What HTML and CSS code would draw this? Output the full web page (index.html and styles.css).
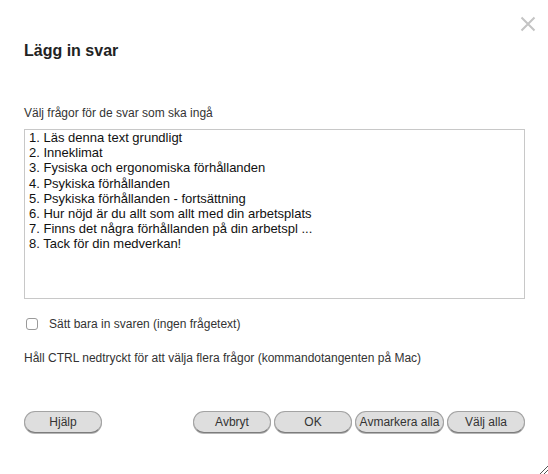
FILE: index.html
```html
<!DOCTYPE html>
<html lang="sv">
<head>
<meta charset="utf-8">
<link rel="stylesheet" href="styles.css">
</head>
<body>
<div class="dialog">
  <button class="close" aria-label="Stäng">
    <svg width="16" height="16" viewBox="0 0 16 16"><path d="M1.5 1.5 L14.5 14.5 M14.5 1.5 L1.5 14.5" stroke="#c4c4c4" stroke-width="2" fill="none"/></svg>
  </button>
  <h1 class="title">Lägg in svar</h1>
  <p class="label">Välj frågor för de svar som ska ingå</p>
  <div class="listbox">
    <div class="opt">1. Läs denna text grundligt</div>
    <div class="opt">2. Inneklimat</div>
    <div class="opt">3. Fysiska och ergonomiska förhållanden</div>
    <div class="opt">4. Psykiska förhållanden</div>
    <div class="opt">5. Psykiska förhållanden - fortsättning</div>
    <div class="opt">6. Hur nöjd är du allt som allt med din arbetsplats</div>
    <div class="opt">7. Finns det några förhållanden på din arbetspl ...</div>
    <div class="opt">8. Tack för din medverkan!</div>
  </div>
  <label class="check"><span class="box"></span>Sätt bara in svaren (ingen frågetext)</label>
  <p class="hint">Håll CTRL nedtryckt för att välja flera frågor (kommandotangenten på Mac)</p>
  <div class="buttons">
    <button class="btn help">Hjälp</button>
    <div class="right">
      <button class="btn">Avbryt</button>
      <button class="btn">OK</button>
      <button class="btn narrow">Avmarkera alla</button>
      <button class="btn">Välj alla</button>
    </div>
  </div>
  <div class="grip"></div>
</div>
</body>
</html>
```
FILE: styles.css
```css
html, body {
  margin: 0;
  padding: 0;
  background: #fff;
}
body {
  font-family: "Liberation Sans", Arial, sans-serif;
  color: #222;
}
.dialog {
  position: relative;
  width: 548px;
  height: 474px;
  box-sizing: border-box;
  padding: 42px 23px 0 24px;
}
.close {
  position: absolute;
  top: 16px;
  right: 12px;
  width: 16px;
  height: 16px;
  padding: 0;
  border: 0;
  background: none;
}
.close svg { display: block; }
.title {
  margin: 0;
  font-size: 16px;
  font-weight: bold;
  line-height: 18px;
  color: #222;
}
.label {
  margin: 46px 0 0;
  font-size: 12px;
  line-height: 14px;
  color: #333;
}
.listbox {
  margin-top: 9px;
  height: 168px;
  border: 1px solid #c8c8c8;
  padding: 0 4px;
  font-size: 13px;
  line-height: 15.2px;
  color: #111;
}
.check {
  display: flex;
  align-items: center;
  margin-top: 18px;
  padding-left: 2px;
  font-size: 12px;
  line-height: 14px;
  color: #333;
}
.box {
  width: 10px;
  height: 10px;
  border: 1px solid #9a9a9a;
  border-radius: 3px;
  margin-right: 11px;
  background: #fff;
}
.hint {
  margin: 20px 0 0;
  font-size: 12px;
  line-height: 14px;
  color: #333;
}
.buttons {
  display: flex;
  justify-content: space-between;
  margin-top: 46px;
}
.right {
  display: flex;
  gap: 3px;
}
.btn {
  width: 78px;
  height: 22px;
  box-sizing: border-box;
  border: 1px solid #a3a3a3;
  border-bottom-color: #7c7c7c;
  border-radius: 11px;
  background: #dedede;
  box-shadow: 0 1px 0 #b5b5b5;
  font-family: "Liberation Sans", Arial, sans-serif;
  font-size: 12px;
  color: #333;
  padding: 0;
}
.btn.narrow {
  width: 89px;
}
.grip {
  position: absolute;
  right: 0;
  bottom: 0;
  width: 10px;
  height: 10px;
  background: repeating-linear-gradient(135deg, transparent 0 2px, #555 2px 3px);
  clip-path: polygon(100% 0, 100% 100%, 0 100%);
}
```
